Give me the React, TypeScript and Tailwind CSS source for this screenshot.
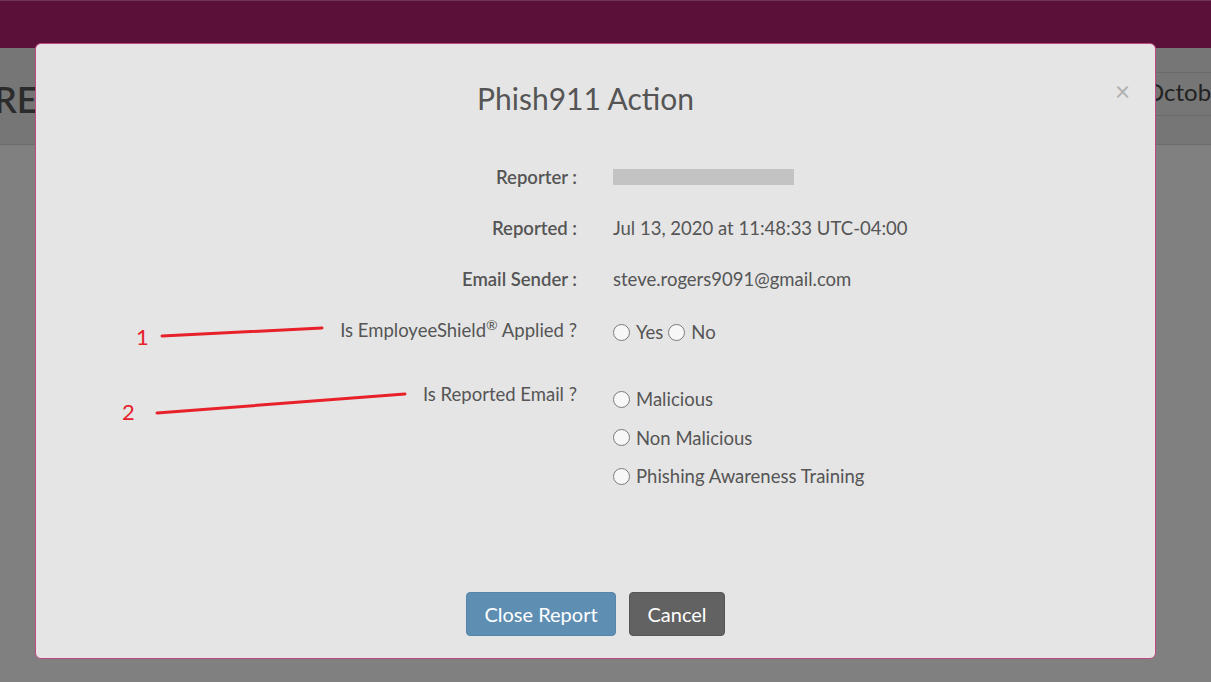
import React from 'react'

const font = { fontFamily: 'Lato, "Open Sans", sans-serif' }

function Radio({ label }: { label: string }) {
  return (
    <label className="flex items-center gap-[6px] cursor-pointer">
      <span className="w-[17px] h-[17px] rounded-full border border-[#7a7a7a] bg-[#f7f7f7] shrink-0" />
      <span>{label}</span>
    </label>
  )
}

export default function App() {
  return (
    <div className="relative w-full h-[682px] overflow-hidden bg-[#808080]" style={font}>
      {/* page behind the backdrop */}
      <div className="h-[48px] bg-[#5a1038] border-t border-[#6d3553]" />
      <div className="h-[97px] bg-[#767676] border-b border-[#6c6c6c] flex items-center justify-between">
        <span className="text-[36px] font-semibold text-[#2b2b2b] -ml-[6px] mt-[6px]">RE</span>
        <div className="self-start mt-[24px] h-[44px] w-[70px] border-y border-[#6a6a6a] flex items-center -mr-[4px]">
          <span className="text-[24px] leading-[30px] -mt-[4px] text-[#222] whitespace-nowrap">October</span>
        </div>
      </div>

      {/* modal */}
      <div className="absolute left-[35px] top-[43px] w-[1121px] h-[616px] bg-[#e5e5e5] border border-[#c04883] rounded-[6px] flex flex-col text-[18.5px] text-[#555]">
        <button className="absolute right-[25px] top-[34px] text-[26px] leading-none text-[#b0b0b0]">×</button>
        <h2 className="pt-[36px] pr-[20px] text-center text-[30px] leading-[36px] text-[#555]">Phish911 Action</h2>

        <div className="mt-[49px] flex flex-col gap-[27px] leading-[24px]">
          <div className="grid grid-cols-[541px_1fr] gap-x-[36px]">
            <span className="text-right font-semibold">Reporter :</span>
            <span className="flex items-center">
              <span className="w-[181px] h-[16px] bg-[#c3c3c3]" />
            </span>
          </div>
          <div className="grid grid-cols-[541px_1fr] gap-x-[36px]">
            <span className="text-right font-semibold">Reported :</span>
            <span>Jul 13, 2020 at 11:48:33 UTC-04:00</span>
          </div>
          <div className="grid grid-cols-[541px_1fr] gap-x-[36px]">
            <span className="text-right font-semibold">Email Sender :</span>
            <span>steve.rogers9091@gmail.com</span>
          </div>
          <div className="grid grid-cols-[541px_1fr] gap-x-[36px]">
            <span className="text-right">
              Is EmployeeShield<sup className="text-[14px]">®</sup> Applied ?
            </span>
            <div className="flex items-center gap-[5px] pt-[2px]">
              <Radio label="Yes" />
              <Radio label="No" />
            </div>
          </div>
        </div>

        <div className="mt-[38px] grid grid-cols-[541px_1fr] gap-x-[36px] leading-[24px]">
          <span className="text-right">Is Reported Email ?</span>
          <div className="flex flex-col gap-[14.5px] pt-[5px]">
            <Radio label="Malicious" />
            <Radio label="Non Malicious" />
            <Radio label="Phishing Awareness Training" />
          </div>
        </div>

        <div className="mt-auto pb-[22px] flex justify-center gap-[13px]">
          <button className="w-[150px] h-[44px] rounded-[4px] bg-[#5f8eb3] border border-[#5686ab] text-white text-[20px]">
            Close Report
          </button>
          <button className="w-[96px] h-[44px] rounded-[4px] bg-[#626262] border border-[#555] text-white text-[20px]">
            Cancel
          </button>
        </div>
      </div>

      {/* red annotations */}
      <svg className="absolute inset-0 pointer-events-none" width="1211" height="682">
        <line x1="162" y1="336" x2="322" y2="328" stroke="#e8202a" strokeWidth="3" strokeLinecap="round" />
        <line x1="157" y1="413" x2="405" y2="394" stroke="#e8202a" strokeWidth="3" strokeLinecap="round" />
      </svg>
      <span className="absolute left-[136px] top-[323px] text-[22px] leading-[28px] text-[#e8202a]">1</span>
      <span className="absolute left-[122px] top-[398px] text-[22px] leading-[28px] text-[#e8202a]">2</span>
    </div>
  )
}
